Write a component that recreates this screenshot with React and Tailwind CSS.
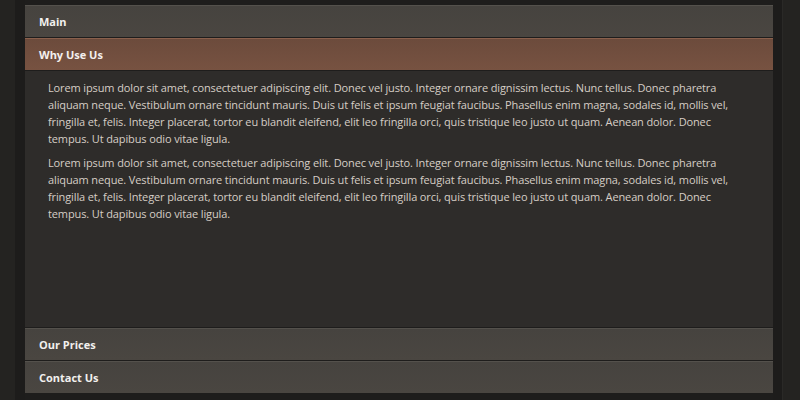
const lorem =
  "Lorem ipsum dolor sit amet, consectetuer adipiscing elit. Donec vel justo. Integer ornare dignissim lectus. Nunc tellus. Donec pharetra aliquam neque. Vestibulum ornare tincidunt mauris. Duis ut felis et ipsum feugiat faucibus. Phasellus enim magna, sodales id, mollis vel, fringilla et, felis. Integer placerat, tortor eu blandit eleifend, elit leo fringilla orci, quis tristique leo justo ut quam. Aenean dolor. Donec tempus. Ut dapibus odio vitae ligula.";

function Header({ title, active }) {
    return (
        <div
            className={
                active
                    ? "h-[32px] flex items-center pl-[14px] pt-[2px] border-t border-[#8a604c] bg-gradient-to-b from-[#6c4b3c] to-[#775241] text-[11px] font-bold text-[#f4f0ee]"
                    : "h-[32px] flex items-center pl-[14px] pt-[2px] border-t border-[#54514c] bg-gradient-to-b from-[#46433f] to-[#4a4641] text-[11px] font-bold text-[#f2f0ee]"
            }
        >
            {title}
        </div>
    );
}

export default function App() {
    return (
        <div
            className="w-[800px] h-[400px] flex bg-[#1e1d1c] overflow-hidden"
            style={{ fontFamily: '"Open Sans", "DejaVu Sans", sans-serif' }}
        >
            <div className="w-[15px] bg-[#242321]" />
            <div className="w-[10px] bg-[#1d1c1b]" />
            <div className="w-[748px] flex flex-col pt-[5px] pb-[7px] gap-[1px] bg-[#1e1d1c]">
                <Header title="Main" />
                <Header title="Why Use Us" active />
                <div className="flex-1 bg-[#2e2c2a] pl-[23px] pr-[23px] pt-[8px] text-[11px] leading-[17px] tracking-[-0.12px] text-[#d6cec6]">
                    <p className="mb-[7px]">{lorem}</p>
                    <p>{lorem}</p>
                </div>
                <Header title="Our Prices" />
                <Header title="Contact Us" />
            </div>
            <div className="w-[9px] bg-[#1d1c1b]" />
            <div className="flex-1 bg-[#242321] border-l border-[#2a2927]" />
        </div>
    );
}
